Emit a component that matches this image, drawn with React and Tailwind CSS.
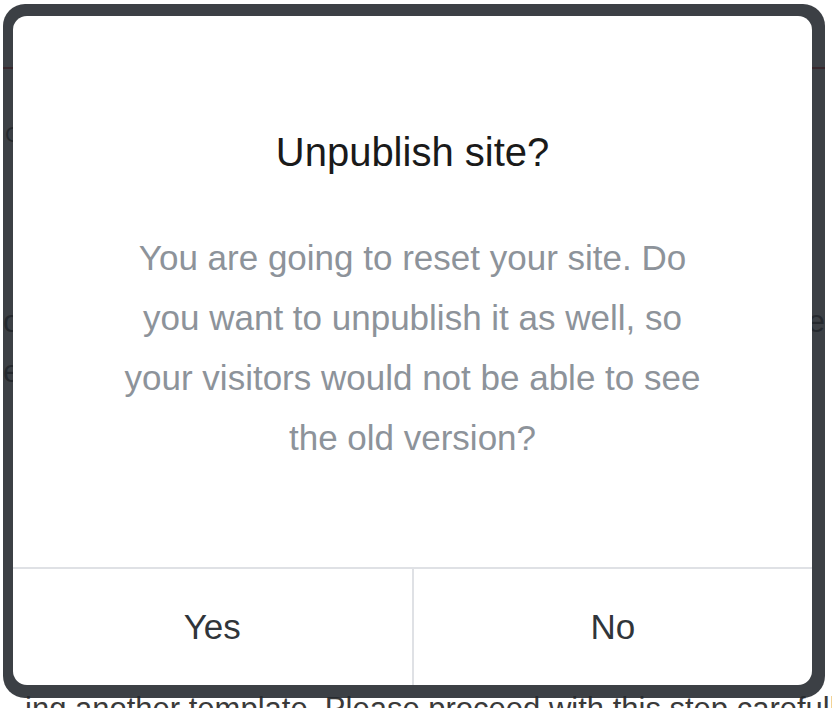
export default function App() {
  const font = "font-['Liberation_Sans','Helvetica_Neue',Arial,sans-serif]";
  return (
    <div className={`relative w-[832px] h-[708px] overflow-hidden bg-white ${font}`}>
      {/* underlying page */}
      <div className="flex flex-col text-[#333]">
        <div className="ml-[3px] h-[69px] w-[822px] border-b-2 border-[#dc2626]" />
        <div className="mt-[53px] pl-[5px] text-[22px] leading-[26px] whitespace-nowrap">
          Choose a template
        </div>
        <div className="ml-[3px] mt-[149px] w-[822px] overflow-hidden text-[31px] leading-[50px] whitespace-nowrap">
          <div>on your site will be replaced by the new design of the theme and their content</div>
          <div>existing content will be removed from the pages.</div>
        </div>
        <div className="mt-[287px] pl-[25px] text-[31px] leading-[50px] whitespace-nowrap text-[#3a3a3a]">
          ing another template. Please proceed with this step carefully.
        </div>
      </div>

      {/* modal overlay */}
      <div className="absolute left-[3px] top-[4px] w-[822px] h-[694px] rounded-[22px] bg-[rgba(36,41,46,0.89)] pt-[12px] pl-[10px] pr-[13px] pb-[13px]">
        <div className="flex h-full flex-col overflow-hidden rounded-[14px] bg-white">
          <div className="flex flex-1 flex-col items-center pt-[112px]">
            <h2 className="text-[40px] leading-[48px] text-[#1a1a1a]">Unpublish site?</h2>
            <p className="mt-[52px] w-[600px] text-center text-[35px] leading-[60px] text-[#8d939a]">
              You are going to reset your site. Do you want to unpublish it as well, so your visitors would not be able to see the old version?
            </p>
          </div>
          <div className="flex h-[118px] border-t-2 border-[#dfe1e5]">
            <button className="flex flex-1 items-center justify-center border-r-2 border-[#dfe1e5] text-[35px] text-[#30353a]">
              Yes
            </button>
            <button className="flex flex-1 items-center justify-center text-[35px] text-[#30353a]">
              No
            </button>
          </div>
        </div>
      </div>
    </div>
  );
}
